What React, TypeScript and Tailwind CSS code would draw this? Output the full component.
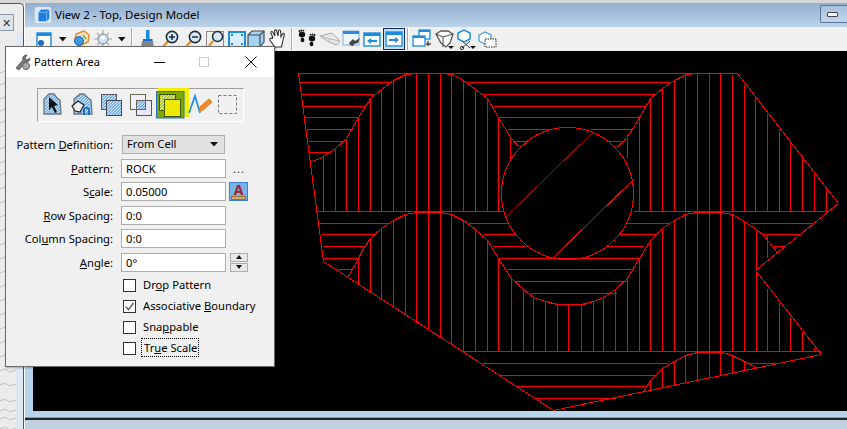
import React from "react";

const font = { fontFamily: '"Noto Sans", "Open Sans", sans-serif' };

const H: [number, number, number][] = [
  [73, 298, 737],
  [82, 299, 389], [94, 301, 373], [106, 303, 365], [117, 304, 358], [129, 306, 353], [141, 308, 343], [152, 309, 330],
  [82, 467, 669], [94, 483, 653], [106, 493, 645], [117, 498, 638], [129, 507, 547], [129, 590, 632], [141, 513, 527], [141, 608, 623],
  [211, 317, 503], [211, 633, 827],
  [223, 319, 387], [223, 468, 507], [223, 626, 668], [223, 750, 813],
  [234, 321, 375], [234, 483, 515], [234, 619, 655], [234, 763, 799],
  [246, 322, 363], [246, 492, 525], [246, 607, 643], [246, 773, 784],
  [258, 323, 358], [258, 498, 639],
  [269, 337, 352], [269, 507, 633],
  [281, 515, 627], [293, 530, 616], [304, 557, 585],
  [351, 463, 820],
  [363, 482, 667], [363, 748, 777], [375, 498, 655], [386, 515, 646], [398, 535, 615],
];

const V: [number, number, number][] = [
  [323, 156, 211], [335, 148, 211], [346, 138, 211], [358, 117, 211], [370, 98, 211], [381, 89, 211], [393, 80, 211], [405, 74, 211],
  [416, 73, 211], [428, 73, 211], [440, 73, 211], [451, 74, 211], [463, 80, 211], [475, 90, 211], [487, 98, 211], [498, 117, 211],
  [510, 137, 160], [627, 137, 157],
  [639, 117, 211], [650, 98, 211], [662, 88, 211], [674, 80, 211], [685, 74, 211], [697, 73, 211], [709, 73, 211], [720, 73, 211],
  [732, 74, 211], [744, 84, 211], [755, 98, 211], [767, 113, 211], [779, 128, 211], [790, 142, 211], [802, 157, 211], [814, 173, 211], [826, 188, 212],
  [358, 258, 283], [370, 238, 291], [381, 228, 298], [393, 220, 306], [405, 214, 314], [416, 212, 322], [428, 212, 329], [440, 212, 337],
  [451, 214, 344], [463, 220, 351], [475, 229, 351], [487, 240, 351], [498, 258, 351], [511, 278, 351], [523, 289, 351], [533, 297, 351],
  [545, 301, 351], [557, 304, 351], [568, 304, 351], [581, 304, 351], [593, 301, 351], [603, 297, 351], [615, 289, 351], [627, 278, 351],
  [639, 258, 351], [650, 240, 351], [662, 228, 351], [674, 220, 351], [685, 214, 351], [697, 212, 351], [709, 212, 351], [720, 212, 351],
  [732, 214, 351], [744, 221, 351], [756, 229, 269], [756, 272, 351], [767, 235, 257], [767, 288, 351], [779, 302, 351], [790, 316, 351],
  [802, 331, 351], [814, 347, 351],
  [650, 380, 390], [662, 368, 387], [674, 361, 385], [685, 355, 382], [697, 352, 380], [709, 351, 377], [720, 352, 375], [732, 355, 373], [744, 361, 370],
];

const curves = [
  "311,161 320,158 335,148 346,138 358,117 370,98 381,89 393,80 405,74 416,73 440,73 452,74 463,80 475,89 487,98 498,117 510,137 520,147",
  "513,141 520,147 527,141",
  "608,141 615,148 623,141 632,129 639,117 650,98 662,88 674,80 686,74 697,73",
  "348,276 358,258 363,248 370,238 381,228 393,220 405,214 417,212 440,212 451,214 463,220 475,229 487,240 498,258 511,278 523,289 533,297 545,301 557,304 581,304 593,301 603,297 615,289 627,278 639,258 650,240 662,228 674,220 685,214 697,212 720,212 732,214 744,221 756,229 763,235 773,247 777,253",
  "642,393 650,380 662,368 674,361 685,355 697,352 722,352 732,355 744,361 757,368",
  "553,257 633,179",
];

function Drawing() {
  return (
    <svg viewBox="33 51 814 360" className="block w-[814px] h-[360px] bg-black" shapeRendering="crispEdges" fill="none" stroke="#ff0000" strokeWidth="1">
      <g transform="translate(.5 .5)">
        <polygon points="298,73 737,73 838,203 755,270 821,354 553,410 323,261" />
        <circle cx="567" cy="193" r="66" />
        <line x1="505" y1="217" x2="592" y2="132" strokeOpacity="0.65" />
        {curves.map((c, i) => <polyline key={i} points={c} />)}
        {H.map(([y, a, b], i) => <line key={i} x1={a} x2={b} y1={y} y2={y} />)}
        {V.map(([x, a, b], i) => <line key={i} x1={x} x2={x} y1={a} y2={b} />)}
      </g>
    </svg>
  );
}

function Cell({ w, children }: { w: string; children?: React.ReactNode }) {
  return <div className={`${w} h-[22px] shrink-0 flex items-center justify-center`}>{children}</div>;
}

function I({ children }: { children: React.ReactNode }) {
  return <svg viewBox="0 0 22 22" className="w-[22px] h-[22px] shrink-0">{children}</svg>;
}

const Caret = () => <svg viewBox="0 0 8 5" className="w-[8px] h-[5px]"><path d="M0 0h7.5L3.8 4.5z" fill="#111" /></svg>;
const Sep = () => <div className="w-[2px] h-[22px] border-l border-[#a8a8a8] bg-white" />;

function Magnifier({ sign }: { sign: string }) {
  return (
    <I>
      <path d="M9 13l-5 6" stroke="#e8902a" strokeWidth="2.6" strokeLinecap="round" />
      <circle cx="13" cy="9" r="5.6" fill="#d7eafa" stroke="#1d2b3c" strokeWidth="1.6" />
      <path d={sign === "+" ? "M10 9h6M13 6v6" : "M10 9h6"} stroke="#1d2b3c" strokeWidth="1.5" />
    </I>
  );
}

function Toolbar() {
  return (
    <div className="h-[24px] bg-[#f0f0f0] flex items-center pl-[8px]">
      <Cell w="w-[22px]"><I><rect x="4" y="5" width="14" height="14" fill="#fff" stroke="#1b8ce0" strokeWidth="1.4" /><rect x="4" y="5" width="14" height="3" fill="#1b8ce0" /><circle cx="8" cy="15" r="3" fill="#1b6fc4" /></I></Cell>
      <Cell w="w-[16px]"><Caret /></Cell>
      <Cell w="w-[20px]"><I><path d="M5 13l1-7 8-3 5 4-1 7-9 4z" fill="#f4e3c8" stroke="#e08a2a" strokeWidth="1.5" /><circle cx="9" cy="13" r="4.4" fill="#3f9be8" stroke="#13609f" /><path d="M13 7l3 4" stroke="#6aa53a" strokeWidth="1.4" /></I></Cell>
      <Cell w="w-[24px]"><I><path d="M11 2v18M2 11h18M5 5l12 12M17 5L5 17" stroke="#a8a8a8" strokeWidth="1.1" /><circle cx="11" cy="11" r="5" fill="#cfe4f6" stroke="#7d8792" /><circle cx="11" cy="10" r="2" fill="#fff" /></I></Cell>
      <Cell w="w-[14px]"><Caret /></Cell>
      <Cell w="w-[6px]"><Sep /></Cell>
      <Cell w="w-[24px]"><I><rect x="10" y="2" width="3.5" height="9" fill="#1b8ce0" /><path d="M7 11h9.5v2H7z" fill="#1b6fc4" /><path d="M6 13h11l1 7H5z" fill="#7f878e" /></I></Cell>
      <Cell w="w-[22px]"><Magnifier sign="+" /></Cell>
      <Cell w="w-[24px]"><Magnifier sign="-" /></Cell>
      <Cell w="w-[22px]"><I><rect x="1.5" y="3.5" width="17" height="17" fill="none" stroke="#222" strokeDasharray="1 1" /><path d="M8 13l-4 5" stroke="#e8902a" strokeWidth="2.4" /><circle cx="12.5" cy="8.5" r="5" fill="#d7eafa" stroke="#1d2b3c" strokeWidth="1.5" /></I></Cell>
      <Cell w="w-[20px]"><I><rect x="3" y="4" width="16" height="15" fill="#d8ecfb" stroke="#1b8ce0" strokeWidth="2" /><path d="M5 6h2v2H5zM15 6h2v2h-2zM5 15h2v2H5zM15 15h2v2h-2z" fill="#1b8ce0" /></I></Cell>
      <Cell w="w-[20px]"><I><path d="M2 7l4-4h12v11l-4 5H2z" fill="#a6d3f2" stroke="#3d4c58" strokeWidth="1.2" /><path d="M2 7h12v12M14 7l4-4" fill="none" stroke="#3d4c58" strokeWidth="1.2" /><path d="M14 20h6l-3 2z" fill="#111" /></I></Cell>
      <Cell w="w-[22px]"><I><path d="M6 10L4 5c-.5-1.5 1-2 1.700-1L8 8 7.500 3c0-1.500 2-1.500 2.200 0L11 8l.5-5c.2-1.400 2-1.300 2.100 0L14 9l1.500-3c.7-1.200 2.300-.5 1.800 1l-1.300 5c-.5 3-1 5-1.500 7H8C6 16 4 14 3 12c-.8-1.500 1-2.500 2-1.500z" fill="#fff" stroke="#333" strokeWidth="1.1" /></I></Cell>
      <Cell w="w-[6px]"><Sep /></Cell>
      <Cell w="w-[24px]">
        <I>
          <g fill="#111">
            <ellipse cx="6" cy="6.500" rx="3.200" ry="3" />
            <ellipse cx="6.500" cy="12" rx="1.900" ry="2.200" />
            <circle cx="3.500" cy="3" r="1" /><circle cx="5.500" cy="2.400" r=".9" /><circle cx="7.500" cy="2.600" r=".8" />
            <ellipse cx="16" cy="10.500" rx="3.200" ry="3" />
            <ellipse cx="15.500" cy="16" rx="1.900" ry="2.200" />
            <circle cx="18.500" cy="7" r="1" /><circle cx="16.500" cy="6.400" r=".9" /><circle cx="14.500" cy="6.600" r=".8" />
          </g>
        </I>
      </Cell>
      <Cell w="w-[22px]"><I><path d="M1 8l12-3 8 8-3 4-8-3z" fill="#e8e8e8" stroke="#a8a8a8" /><path d="M1 8l10 3 10 2M10 14l1-3" fill="none" stroke="#b8b8b8" /></I></Cell>
      <Cell w="w-[22px]"><I><rect x="2" y="3" width="16" height="14" fill="#eef5fc" stroke="#7fb2e6" /><rect x="2" y="3" width="16" height="3" fill="#2a8ce0" /><path d="M8 15l4-4 2 2 5-3-2 5-4 1-1 2-3-1z" fill="#444" /></I></Cell>
      <Cell w="w-[20px]"><I><rect x="2" y="5" width="16" height="13" fill="#fff" stroke="#1b8ce0" strokeWidth="1.4" /><rect x="2" y="5" width="16" height="3" fill="#1b8ce0" /><path d="M5 13l4-3v2h6v2H9v2z" fill="#1b8ce0" /></I></Cell>
      <div className="w-[22px] h-[22px] shrink-0 border border-[#0a2a80] bg-[#c6dff5] flex items-center justify-center">
        <svg viewBox="0 0 18 16" className="w-[18px] h-[16px]"><rect x="1" y="1" width="16" height="14" fill="#fff" stroke="#1b8ce0" strokeWidth="1.4" /><rect x="1" y="1" width="16" height="3" fill="#1b8ce0" /><path d="M14 9l-4 3v-2H4V8h6V6z" fill="#1b8ce0" /></svg>
      </div>
      <Cell w="w-[6px]"><Sep /></Cell>
      <Cell w="w-[22px]"><I><rect x="8" y="2" width="11" height="9" fill="#fff" stroke="#1b8ce0" strokeWidth="1.3" /><rect x="8" y="2" width="11" height="2" fill="#1b8ce0" /><rect x="2" y="8" width="12" height="10" fill="#fff" stroke="#1b8ce0" strokeWidth="1.3" /><rect x="2" y="8" width="12" height="2" fill="#1b8ce0" /><path d="M17 13v5M15 16h5" stroke="#111" /></I></Cell>
      <Cell w="w-[22px]"><I><path d="M3 6l5-3h7l5 3-3 9-4 4-5-4z" fill="#fff" stroke="#555" strokeWidth="1.3" /><path d="M3 6l7 3 10-3M10 9v10" fill="none" stroke="#555" strokeWidth="1.1" /><path d="M15 18h6l-3 3z" fill="#111" /></I></Cell>
      <Cell w="w-[22px]"><I><path d="M3 5l6-3 6 3v6l-6 3-6-3z" fill="#fff" stroke="#1b8ce0" strokeWidth="1.5" /><path d="M7 13l8 7M15 13l-8 7" stroke="#444" /><circle cx="7" cy="20" r="1.600" fill="none" stroke="#333" /><path d="M15 18h6l-3 3z" fill="#111" /></I></Cell>
      <Cell w="w-[22px]"><I><path d="M2 7l6-3 6 3v6l-6 3-6-3z" fill="#fff" stroke="#4aa0e4" strokeWidth="1.3" /><rect x="8" y="11" width="11" height="8" fill="#fff" stroke="#222" strokeDasharray="1.500 1" /></I></Cell>
    </div>
  );
}

function Hatch({ id, color = "#7ab2ea" }: { id: string; color?: string }) {
  return (
    <defs>
      <pattern id={id} width="3" height="3" patternUnits="userSpaceOnUse">
        <rect width="3" height="3" fill={color} />
        <path d="M0 3L3 0" stroke="#e8f2fc" strokeWidth=".9" />
      </pattern>
    </defs>
  );
}

function PatternTools() {
  const cls = "h-[31px] shrink-0 block";
  return (
    <div className="ml-[31px] mt-[11px] w-[207px] h-[34px] border border-[#a0a0a0] border-b-white border-r-white flex">
      <svg viewBox="38 89 29 31" className={`w-[29px] ${cls}`}>
        <Hatch id="h1" />
        <path d="M44 114V99l5-5h5l3 4 3 2 1 14z" fill="url(#h1)" stroke="#6d7680" strokeWidth="1.3" />
        <path d="M49 97l9 8-4 1 3 6-2 1-3-6-3 3z" fill="#111" />
      </svg>
      <svg viewBox="67 89 29 31" className={`w-[29px] ${cls}`}>
        <Hatch id="h2" />
        <path d="M74 114V99l6-5h4l4 4 3 2 1 14z" fill="url(#h2)" stroke="#6d7680" strokeWidth="1.3" />
        <path d="M72 106l6-5 6 4-4 7-5-1z" fill="#f0f0f0" stroke="#222" strokeWidth="1.200" />
        <path d="M84 115v-6a3 3 0 0 1 5 0v6" fill="none" stroke="#1b6fc4" strokeWidth="2" />
      </svg>
      <svg viewBox="96 89 29 31" className={`w-[29px] ${cls}`}>
        <Hatch id="h3" />
        <rect x="101.500" y="94.500" width="15" height="15" fill="url(#h3)" stroke="#556" />
        <rect x="106.500" y="100.500" width="15" height="15" fill="url(#h3)" stroke="#445" />
      </svg>
      <svg viewBox="125 89 29 31" className={`w-[29px] ${cls}`}>
        <Hatch id="h4" />
        <rect x="130.500" y="94.500" width="15" height="15" fill="#f4f0fa" stroke="#665" />
        <rect x="136.500" y="100.500" width="15" height="15" fill="#ebe6f8" stroke="#555" />
        <rect x="136.500" y="100.500" width="9" height="9" fill="url(#h4)" stroke="#665" />
      </svg>
      <svg viewBox="154 89 33 31" className={`w-[33px] ${cls} overflow-visible`}>
        <Hatch id="h5" color="#b4c81c" />
        <rect x="158" y="88" width="31" height="29" fill="#f0f000" />
        <rect x="156.500" y="91.500" width="27.500" height="26.500" fill="#7fa800" stroke="#2a6fc0" />
        <rect x="159.500" y="94.500" width="16" height="16" fill="url(#h5)" stroke="#3c5500" />
        <rect x="164.500" y="99.500" width="16" height="17" fill="#efe800" stroke="#3c5500" />
      </svg>
      <svg viewBox="187 89 27 31" className={`w-[27px] ${cls}`}>
        <path d="M189 113l6-17 5 17" fill="none" stroke="#1b8ce0" strokeWidth="1.700" />
        <path d="M199 112l1-5 9-8 3 3-9 8z" fill="#f08a24" stroke="#e07a14" />
      </svg>
      <svg viewBox="214 89 28 31" className="w-[28px] h-[31px] shrink-0 block">
        <rect x="218.500" y="95.500" width="18" height="18" fill="none" stroke="#777" strokeDasharray="3 2" />
      </svg>
    </div>
  );
}

function Label({ children }: { children: React.ReactNode }) {
  return <div className="w-[106px] text-right pr-[1px] text-[11.2px] leading-[19px] text-black whitespace-nowrap">{children}</div>;
}

function Input({ value }: { value: string }) {
  return <div className="w-[105px] h-[19px] ml-[7px] bg-white border border-[#adadad] pl-[4px] text-[11.2px] leading-[17px] text-black">{value}</div>;
}

function Check({ label, checked, focus }: { label: React.ReactNode; checked?: boolean; focus?: boolean }) {
  return (
    <div className="flex items-center h-[13px]">
      <div className="w-[13px] h-[13px] bg-white border border-[#333] flex items-center justify-center">
        {checked && <svg viewBox="0 0 11 11" className="w-[11px] h-[11px]"><path d="M1.500 5.500l3 3 5-6.500" fill="none" stroke="#555" strokeWidth="1.300" /></svg>}
      </div>
      <div className={focus ? "ml-[5px] -mt-[1px] pl-[2px] pr-[1px] h-[19px] leading-[17px] border border-dotted border-black text-[11.2px] whitespace-nowrap" : "ml-[7px] -mt-[1px] text-[11.2px] leading-[19px] whitespace-nowrap"}>{label}</div>
    </div>
  );
}

function Dialog() {
  return (
    <div className="absolute left-[5px] top-[46px] w-[270px] h-[321px] bg-[#f0f0f0] border border-[#6a6a6a] shadow-[1px_1px_2px_rgba(0,0,0,0.3)]">
      <div className="h-[30px] bg-white flex items-center relative">
        <svg viewBox="0 0 18 18" className="w-[18px] h-[18px] ml-[7px]">
          <path d="M3 15L10 7c-1-3 1-5 4-5l-2 3 2 2 3-2c0 3-2 5-5 4l-6 8z" fill="#777" stroke="#444" strokeWidth=".7" />
          <circle cx="13" cy="13" r="3.500" fill="#aaa" stroke="#666" />
        </svg>
        <div className="ml-[3px] text-[11.2px] text-black">Pattern Area</div>
        <div className="flex-1" />
        <div className="w-[11px] h-[1px] bg-black mr-[34px]" />
        <div className="w-[10px] h-[10px] border border-[#cccccc] mr-[36px]" />
        <svg viewBox="0 0 12 12" className="w-[12px] h-[12px] mr-[17px]"><path d="M.5.5l11 11M11.500.5l-11 11" stroke="#111" /></svg>
      </div>
      <PatternTools />
      <div className="mt-[13px] flex flex-col gap-[4.6px]">
        <div className="flex ml-[2px]">
          <Label>Pattern <span className="underline">D</span>efinition:</Label>
          <div className="ml-[8px] w-[103px] h-[19px] bg-[#e1e1e1] border border-[#adadad] flex items-center pl-[4px] pr-[6px] justify-between text-[11.2px]">
            <span>From Cell</span>
            <svg viewBox="0 0 8 5" className="w-[8px] h-[5px]"><path d="M0 0h8L4 4.500z" fill="#111" /></svg>
          </div>
        </div>
        <div className="flex items-center ml-[2px]">
          <Label><span className="underline">P</span>attern:</Label>
          <Input value="ROCK" />
          <div className="ml-[7px] text-[11.2px] leading-[19px] text-[#333] tracking-[1px]">...</div>
        </div>
        <div className="flex items-center ml-[2px]">
          <Label>S<span className="underline">c</span>ale:</Label>
          <Input value="0.05000" />
          <div className="ml-[3px] w-[19px] h-[19px] bg-[#79b2e6] border border-[#3a80d0] flex flex-col items-center justify-end">
            <span className="text-[14px] leading-[12px] font-bold text-[#a81c2c]">A</span>
            <div className="w-[15px] h-[4px] bg-[#d8a860] border border-[#9a7030]" />
          </div>
        </div>
        <div className="flex items-center ml-[2px]">
          <Label><span className="underline">R</span>ow Spacing:</Label>
          <Input value="0:0" />
        </div>
        <div className="flex items-center ml-[2px]">
          <Label>Col<span className="underline">u</span>mn Spacing:</Label>
          <Input value="0:0" />
        </div>
        <div className="flex items-center ml-[2px]">
          <Label><span className="underline">A</span>ngle:</Label>
          <Input value="0°" />
          <div className="ml-[4px] w-[18px] h-[19px] flex flex-col gap-[1px]">
            <div className="h-[9px] bg-[#e8e8e8] border border-[#adadad] flex items-center justify-center"><svg viewBox="0 0 6 4" className="w-[6px] h-[4px]"><path d="M0 4h6L3 0z" fill="#111" /></svg></div>
            <div className="h-[9px] bg-[#e8e8e8] border border-[#adadad] flex items-center justify-center"><svg viewBox="0 0 6 4" className="w-[6px] h-[4px]"><path d="M0 0h6L3 4z" fill="#111" /></svg></div>
          </div>
        </div>
      </div>
      <div className="mt-[7px] ml-[117px] flex flex-col gap-[8px]">
        <Check label={<>Dr<span className="underline">o</span>p Pattern</>} />
        <Check checked label={<>Associative <span className="underline">B</span>oundary</>} />
        <Check label={<>Sna<span className="underline">p</span>pable</>} />
        <Check focus label={<>Tr<span className="underline">u</span>e Scale</>} />
      </div>
    </div>
  );
}

function LeftStrip() {
  const ys = [40, 52, 66, 78, 90, 104, 116, 130, 142, 156, 170, 184, 198, 212, 226, 240, 254, 268, 282, 296, 310, 324, 338, 352, 368, 378, 386, 396, 404, 412, 422];
  return (
    <div className="w-[24px] shrink-0 flex flex-col border-r border-t border-[#555] rounded-tr-[5px] overflow-hidden">
      <div className="h-[29px] bg-[#ececec] pt-[10px]">
        <div className="w-[14px] h-[17px] bg-[#dfe4ea] border border-[#8b98a8] border-l-0 flex items-center justify-center text-[11px] leading-none text-[#333]">✕</div>
      </div>
      <div className="flex-1 flex bg-[#dde8f3]">
        <svg viewBox="0 0 16 396" className="block w-[16px] h-[396px] bg-[#ececec]" fill="none" stroke="#b5b5b5" strokeWidth=".8">
          {ys.map((y, i) => <path key={i} d={`M0 ${y}l5 -2 5 3 6 -2`} />)}
        </svg>
      </div>
    </div>
  );
}

export default function App() {
  return (
    <div className="relative w-[847px] h-[429px] overflow-hidden flex flex-col bg-[#c3d0df]" style={font}>
      <div className="h-[3px] shrink-0 bg-[#d6d6d6]" />
      <div className="flex-1 flex min-h-0">
        <LeftStrip />
        <div className="w-[823px] shrink-0 flex flex-col border-l border-white">
          <div className="h-[24px] shrink-0 bg-gradient-to-b from-[#92aece] to-[#bcd3ea] flex items-center">
            <svg viewBox="0 0 20 20" className="w-[18px] h-[18px] ml-[9px]">
              <rect x="1" y="1" width="18" height="18" rx="2" fill="#dfe8f2" />
              <path d="M5 7l3-3h9v10l-3 3H5z" fill="#1b7fe0" />
              <path d="M5 7h9v10M14 7l3-3" fill="none" stroke="#8fd0ff" strokeWidth=".8" />
            </svg>
            <div className="ml-[3px] text-[11.5px] text-black whitespace-nowrap">View 2 - Top, Design Model</div>
            <div className="flex-1" />
            <div className="w-[27px] h-[18px] mt-[-2px] border border-[#5d7396] rounded-l-[2px] border-r-0 bg-gradient-to-b from-[#a6bfdc] to-[#c0d6ec] flex items-center justify-center">
              <div className="w-[11px] h-[5px] bg-[#f4f4f4] border border-[#444] rounded-[1px] ml-[-3px]" />
            </div>
          </div>
          <Toolbar />
          <div className="h-[366px] shrink-0 bg-[#b8d3ec] pl-[8px]">
            <Drawing />
          </div>
          <div className="h-[1px] shrink-0 bg-[#35c0d0]" />
          <div className="h-[2px] shrink-0 bg-[#222]" />
        </div>
      </div>
      <Dialog />
    </div>
  );
}
